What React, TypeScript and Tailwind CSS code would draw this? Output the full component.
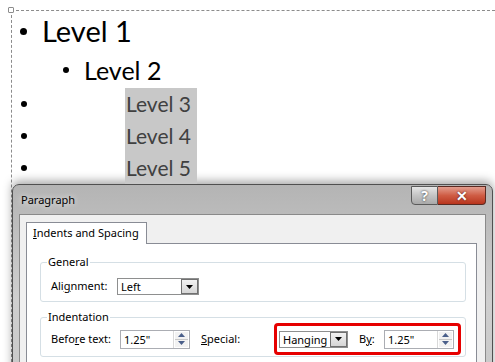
import React from 'react'

function Caret() {
  return (
    <svg width="7" height="4" viewBox="0 0 7 4">
      <path d="M0 0h7L3.5 4z" fill="#000" />
    </svg>
  )
}

function ComboBox({ value, width }: { value: string; width: string }) {
  return (
    <div className={`flex h-[17px] ${width} border border-[#8e8f8f] bg-white`}>
      <div className="flex-1 pl-[3px] leading-[15px]">{value}</div>
      <div className="flex w-[17px] items-center justify-center border border-[#707070] bg-gradient-to-b from-[#f2f2f2] to-[#d6d6d6]">
        <Caret />
      </div>
    </div>
  )
}

function Spinner({ value, width }: { value: string; width: string }) {
  return (
    <div className={`flex h-[19px] ${width} border border-[#abadb3] bg-white`}>
      <div className="flex-1 pl-[3px] leading-[17px]">{value}</div>
      <div className="flex w-[16px] flex-col border-l border-[#d9d9d9] p-[1px]">
        <div className="flex flex-1 items-center justify-center border-b border-[#c8c8c8] bg-[#f2f2f2]">
          <svg width="7" height="4" viewBox="0 0 7 4">
            <path d="M0 4h7L3.5 0z" fill="#4a5f8a" />
          </svg>
        </div>
        <div className="flex flex-1 items-center justify-center bg-[#f2f2f2]">
          <svg width="7" height="4" viewBox="0 0 7 4">
            <path d="M0 0h7L3.5 4z" fill="#4a5f8a" />
          </svg>
        </div>
      </div>
    </div>
  )
}

function GroupBox({ label, className, children }: { label: string; className: string; children: React.ReactNode }) {
  return (
    <div className={`relative rounded-[3px] border border-[#d5dfe5] ${className}`}>
      <span className="absolute -top-[9px] left-[6px] bg-white px-[1px] leading-[16px]">{label}</span>
      {children}
    </div>
  )
}

export default function App() {
  return (
    <div className="relative h-[362px] w-[495px] overflow-hidden bg-white">
      {/* slide placeholder */}
      <div className="ml-[11px] mt-[10px] h-[352px] border-l border-t border-dashed border-[#8c8c8c] font-['Lato',sans-serif]">
        <div className="pl-[8px] pt-[4px]">
          <div className="flex h-[32px] items-center text-[29px] text-black">
            <span className="h-[7px] w-[7px] rounded-full bg-black" />
            <span className="ml-[15px] leading-[32px]">Level 1</span>
          </div>
          <div className="mt-[7px] flex h-[32px] items-center pl-[43px] text-[25px] text-black">
            <span className="h-[6px] w-[6px] rounded-full bg-black" />
            <span className="ml-[15px] leading-[32px]">Level 2</span>
          </div>
          <div className="mt-[2px]">
            {['Level 3', 'Level 4', 'Level 5'].map((t) => (
              <div key={t} className="flex h-[32px] items-center text-[21px] text-[#404040]">
                <span className="ml-px h-[6px] w-[6px] rounded-full bg-black" />
                <span className="ml-[98px] h-[32px] w-[72px] bg-[#c8c8c8] pl-[1px] leading-[32px]">{t}</span>
              </div>
            ))}
          </div>
        </div>

        {/* Paragraph dialog */}
        <div className="w-[481px] rounded-t-[7px] border border-[#505050] bg-gradient-to-b from-[#b4b4b4] via-[#cfcfcf] to-[#c6c6c6] px-[6px] font-['Noto_Sans',sans-serif] text-[11px] text-black shadow-[0_-3px_10px_rgba(0,0,0,0.35)]">
          <div className="flex h-[29px] items-start">
            <span className="mt-[7px] ml-[2px] leading-[16px] [text-shadow:0_0_6px_#fff]">Paragraph</span>
            <div className="ml-auto mt-[1px] flex h-[19px]">
              <div className="flex w-[27px] items-center justify-center rounded-bl-[4px] border border-[#5a5a5a] bg-gradient-to-b from-[#e6e6e6] via-[#c4c4c4] to-[#a9a9a9] text-[14px] font-bold text-white [text-shadow:0_0_2px_#222]">
                ?
              </div>
              <div className="flex w-[48px] items-center justify-center rounded-br-[4px] border border-l-0 border-[#5a2a22] bg-gradient-to-b from-[#e29c8d] via-[#cf5c44] to-[#b8341c] text-[14px] font-bold text-white [text-shadow:0_0_2px_#401010]">
                ✕
              </div>
            </div>
          </div>
          <div className="h-[200px] border border-[#8a8a8a] bg-[#f0f0f0] pl-[6px] pr-[8px] pt-[7px]">
            <div className="relative z-10 -mb-px flex h-[22px] w-[121px] items-center border border-b-0 border-[#898c95] bg-white pl-[6px]">
              <span>
                <span className="underline">I</span>ndents and Spacing
              </span>
            </div>
            <div className="h-[200px] border border-[#898c95] bg-white pl-[13px] pr-[10px] pt-[18px]">
              <GroupBox label="General" className="h-[40px]">
                <div className="ml-[10px] mt-[15px] flex items-center">
                  <span className="w-[66px]">
                    Ali<span className="underline">g</span>nment:
                  </span>
                  <ComboBox value="Left" width="w-[82px]" />
                </div>
              </GroupBox>
              <GroupBox label="Indentation" className="mt-[15px] h-[40px]">
                <div className="ml-[10px] mt-[5px] flex items-center">
                  <span className="w-[69px]">
                    Befo<span className="underline">r</span>e text:
                  </span>
                  <Spinner value={'1.25"'} width="w-[70px]" />
                  <span className="ml-[11px] w-[73px]">
                    <span className="underline">S</span>pecial:
                  </span>
                  <div className="flex h-[32px] w-[187px] items-center rounded-[4px] border-[3px] border-[#e60000] pl-[2px]">
                    <ComboBox value="Hanging" width="w-[69px]" />
                    <span className="ml-[11px] w-[25px]">
                      B<span className="underline">y</span>:
                    </span>
                    <Spinner value={'1.25"'} width="w-[70px]" />
                  </div>
                </div>
              </GroupBox>
            </div>
          </div>
        </div>
      </div>
      {/* selection handle */}
      <div className="absolute left-[8px] top-[7px] h-[6px] w-[6px] rounded-[1px] border border-[#8c8c8c] bg-white" />
    </div>
  )
}
